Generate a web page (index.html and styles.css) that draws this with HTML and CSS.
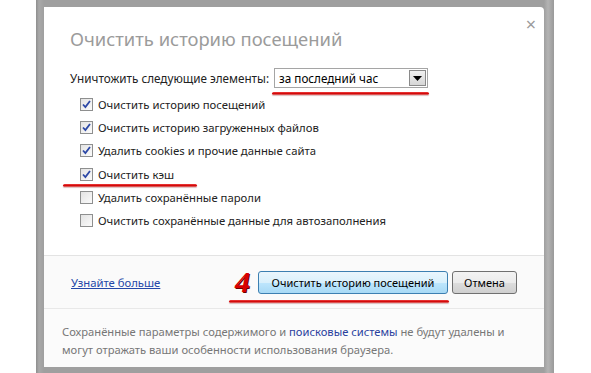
FILE: index.html
```html
<!DOCTYPE html>
<html lang="ru">
<head>
<meta charset="utf-8">
<link rel="stylesheet" href="styles.css">
</head>
<body>
<div class="frame">
  <div class="dialog">
    <span class="close">×</span>
    <div class="main">
      <h1 class="title">Очистить историю посещений</h1>
      <div class="range-row">
        <span class="range-label">Уничтожить следующие элементы:</span>
        <span class="select">
          <span class="select-text">за последний час</span>
          <span class="select-btn"><svg width="9" height="5" viewBox="0 0 9 5"><path d="M0 0h9L4.5 5z" fill="#000"/></svg></span>
          <span class="redline redline-select"></span>
        </span>
      </div>
      <ul class="checks">
        <li class="check"><span class="box on"><svg width="9" height="9" viewBox="0 0 9 9"><path d="M1 4.5l2.4 2.6L8 1" fill="none" stroke="#2c48a6" stroke-width="1.8"/></svg></span>Очистить историю посещений</li>
        <li class="check"><span class="box on"><svg width="9" height="9" viewBox="0 0 9 9"><path d="M1 4.5l2.4 2.6L8 1" fill="none" stroke="#2c48a6" stroke-width="1.8"/></svg></span>Очистить историю загруженных файлов</li>
        <li class="check"><span class="box on"><svg width="9" height="9" viewBox="0 0 9 9"><path d="M1 4.5l2.4 2.6L8 1" fill="none" stroke="#2c48a6" stroke-width="1.8"/></svg></span>Удалить cookies и прочие данные сайта</li>
        <li class="check cache"><span class="box on"><svg width="9" height="9" viewBox="0 0 9 9"><path d="M1 4.5l2.4 2.6L8 1" fill="none" stroke="#2c48a6" stroke-width="1.8"/></svg></span>Очистить кэш<span class="redline redline-cache"></span></li>
        <li class="check"><span class="box"></span>Удалить сохранённые пароли</li>
        <li class="check"><span class="box"></span>Очистить сохранённые данные для автозаполнения</li>
      </ul>
    </div>
    <div class="actions">
      <a class="more" href="#">Узнайте больше</a>
      <div class="buttons">
        <span class="step">4</span>
        <button class="btn primary">Очистить историю посещений</button>
        <button class="btn cancel">Отмена</button>
        <span class="redline redline-button"></span>
      </div>
    </div>
    <div class="note">
      <p>Сохранённые параметры содержимого и <a href="#">поисковые системы</a> не будут удалены и<br>могут отражать ваши особенности использования браузера.</p>
    </div>
  </div>
</div>
</body>
</html>
```
FILE: styles.css
```css
* { box-sizing: border-box; }
html, body { margin: 0; padding: 0; }
body {
  background: #fff;
  width: 591px;
  height: 373px;
  overflow: hidden;
  font-family: "Noto Sans", "Open Sans", sans-serif;
}
.frame {
  margin-left: 36px;
  width: 518px;
  height: 373px;
  padding: 7px 10px 0 8px;
  background: linear-gradient(90deg, #8e8e8e 0, #a9a9a9 3px, #9f9f9f 8px, #9f9f9f 508px, #b3b3b3 512px, #9a9a9a 518px);
}
.dialog {
  position: relative;
  width: 500px;
  height: 360px;
  background: #fff;
  border-top-right-radius: 4px;
  display: flex;
  flex-direction: column;
}
.close {
  position: absolute;
  top: 7px;
  right: 8px;
  font-size: 18px;
  color: #9a9a9a;
  line-height: 20px;
}
.main {
  flex-shrink: 0;
  padding: 20px 0 0 26px;
  height: 248px;
}
.title {
  margin: 0;
  font-weight: normal;
  font-size: 18.4px;
  line-height: 24px;
  color: #9b9b9b;
}
.range-row {
  margin-top: 17px;
  display: flex;
  align-items: center;
  height: 20px;
  font-size: 11.7px;
  color: #222;
  gap: 5px;
}
.select {
  position: relative;
  display: flex;
  align-items: center;
  justify-content: space-between;
  width: 154px;
  height: 20px;
  border: 1px solid #a5a5a5;
  padding: 0 1px 0 4px;
  color: #000;
}
.select-btn {
  width: 17px;
  height: 16px;
  border: 1px solid #8a8a8a;
  background: linear-gradient(#f0f0f0, #d6d6d6);
  display: flex;
  align-items: center;
  justify-content: center;
}
.redline {
  position: absolute;
  height: 3px;
  border-radius: 2px;
  background: linear-gradient(#f04040, #cc0000 60%, #e89090);
  box-shadow: 0 1px 1px rgba(120, 0, 0, 0.25);
}
.redline-select { left: -3px; right: -2px; bottom: -8px; }
.checks {
  list-style: none;
  margin: 5px 0 0 10px;
  padding: 0;
}
.check {
  position: relative;
  display: flex;
  align-items: center;
  height: 23.2px;
  font-size: 11.3px;
  color: #222;
}
.box {
  width: 13px;
  height: 13px;
  margin-right: 5px;
  border: 1px solid #8e8f8f;
  background: linear-gradient(135deg, #e3e3e3, #fbfbfb);
  display: flex;
  align-items: center;
  justify-content: center;
}
.redline-cache { left: -17px; width: 134px; bottom: -1px; }
.actions {
  flex-shrink: 0;
  height: 54px;
  border-top: 1px solid #e3e3e3;
  border-bottom: 1px solid #e8e8e8;
  background: #fafafa;
  display: flex;
  align-items: center;
  justify-content: space-between;
  padding: 0 27px 0 27px;
}
.more {
  font-size: 11.3px;
  color: #2447a8;
  text-decoration: underline;
}
.buttons {
  position: relative;
  display: flex;
  align-items: center;
  gap: 4px;
}
.step {
  font-family: "Liberation Serif", serif;
  font-style: italic;
  font-weight: bold;
  font-size: 30px;
  line-height: 26px;
  color: #d80000;
  text-shadow: 1px 1px 0 #6a0000;
  margin-right: 4px;
}
.btn {
  font-family: "Noto Sans", "Open Sans", sans-serif;
  font-size: 11px;
  white-space: nowrap;
  color: #000;
  height: 23px;
  padding: 0;
  border: 1px solid #707070;
  border-radius: 3px;
  background: linear-gradient(#f3f3f3 0, #ebebeb 50%, #dddddd 51%, #cfcfcf 100%);
}
.btn.primary {
  width: 190px;
  border-color: #3c7fb1;
  background: linear-gradient(#eaf6fd 0, #d9f0fc 50%, #bee6fd 51%, #a7d9f5 100%);
}
.btn.cancel { width: 65px; }
.redline-button { left: -6px; right: 68px; bottom: -8px; }
.note {
  flex: 1;
  background: #fbfbfb;
  padding: 14px 10px 0 18px;
}
.note p {
  margin: 0;
  font-size: 11.2px;
  line-height: 18px;
  white-space: nowrap;
  color: #777;
}
.note a {
  color: #2a3f9e;
  text-decoration: none;
}
```
